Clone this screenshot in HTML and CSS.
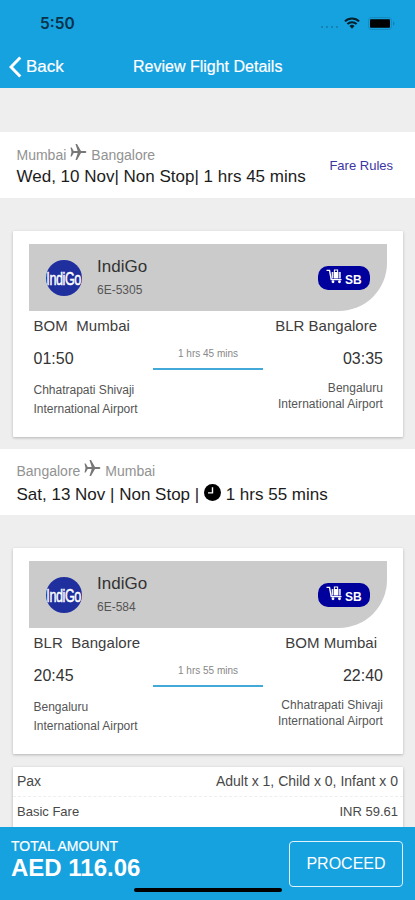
FILE: index.html
```html
<!DOCTYPE html>
<html lang="en">
<head>
<meta charset="utf-8">
<title>Review Flight Details</title>
<link rel="stylesheet" href="styles.css">
</head>
<body>
<svg class="defs" aria-hidden="true">
  <symbol id="plane" viewBox="0 0 16 16">
    <path d="M0 3.600h1.200L3.200 7h4L5 0h1.500l4 7H14c2.600 0 2.600 2 0 2h-3.500l-4 7H5l2.200-7h-4l-2 3.400H0L1 8z"/>
  </symbol>
  <symbol id="trolley" viewBox="0 0 18 16">
    <path d="M.5 1.500h3.200l1.800 9.800h11" fill="none" stroke="#fff" stroke-width="1.500"/>
    <path d="M6 3.200h1.300v7H6zM8 3.200h5.200v7H8zM14 3.200h1.600v7H14z" fill="#fff"/>
    <path d="M8.900 3.200V1h3.400v2.200" fill="none" stroke="#fff" stroke-width="1.100"/>
    <circle cx="7.400" cy="13.600" r="1.500" fill="#fff"/>
    <circle cx="14.300" cy="13.600" r="1.500" fill="#fff"/>
  </symbol>
</svg>
<div class="screen">
  <header class="top">
    <div class="status">
      <span class="clock">5:50</span>
      <span class="signal"><i></i><i></i><i></i><i></i></span>
      <svg class="wifi" viewBox="0 0 16 12"><path d="M.9 4.400a10.200 10.200 0 0 1 14.200 0M3.400 7a6.600 6.600 0 0 1 9.200 0" fill="none" stroke="#06202c" stroke-width="2"/><path d="M5.500 9a3.700 3.700 0 0 1 5 0L8 11.800z" fill="#06202c"/></svg>
      <svg class="battery" viewBox="0 0 27 13"><rect x=".5" y=".5" width="23" height="12" rx="3" fill="none" stroke="#168bc0"/><rect x="2" y="2.300" width="20" height="8.400" rx="1" fill="#000"/><path d="M25 4.300c2 .7 2 3.700 0 4.400z" fill="#1581b1"/></svg>
    </div>
    <div class="nav">
      <svg class="chevron" viewBox="0 0 13 22"><path d="M11.300 1.500 2 11l9.300 9.500" fill="none" stroke="#fff" stroke-width="3"/></svg>
      <span class="back">Back</span>
      <span class="title">Review Flight Details</span>
    </div>
  </header>

  <main class="content">
    <section class="leg">
      <div>
        <div class="route"><span>Mumbai</span><svg class="plane"><use href="#plane"/></svg><span>Bangalore</span></div>
        <div class="when">Wed, 10 Nov| Non Stop| 1 hrs 45 mins</div>
      </div>
      <a class="rules">Fare Rules</a>
    </section>

    <article class="card">
      <div class="airline">
        <div class="logo"><span>IndiGo</span></div>
        <div class="flight"><div class="name">IndiGo</div><div class="number">6E-5305</div></div>
        <div class="badge"><svg class="trolley"><use href="#trolley"/></svg><b>SB</b></div>
      </div>
      <div class="trip">
        <div class="from">
          <div class="city">BOM&nbsp; Mumbai</div>
          <div class="time">01:50</div>
          <div class="airport">Chhatrapati Shivaji<br>International Airport</div>
        </div>
        <div class="duration">1 hrs 45 mins</div>
        <div class="to">
          <div class="city">BLR Bangalore</div>
          <div class="time">03:35</div>
          <div class="airport">Bengaluru<br>International Airport</div>
        </div>
      </div>
    </article>

    <section class="leg return">
      <div>
        <div class="route"><span>Bangalore</span><svg class="plane"><use href="#plane"/></svg><span>Mumbai</span></div>
        <div class="when">Sat, 13 Nov | Non Stop | <svg class="dial" viewBox="0 0 16 16"><circle cx="8" cy="8" r="8"/><path d="M8 3v5.300H3.800" fill="none" stroke="#fff" stroke-width="1.300"/></svg> 1 hrs 55 mins</div>
      </div>
    </section>

    <article class="card">
      <div class="airline">
        <div class="logo"><span>IndiGo</span></div>
        <div class="flight"><div class="name">IndiGo</div><div class="number">6E-584</div></div>
        <div class="badge"><svg class="trolley"><use href="#trolley"/></svg><b>SB</b></div>
      </div>
      <div class="trip">
        <div class="from">
          <div class="city">BLR&nbsp; Bangalore</div>
          <div class="time">20:45</div>
          <div class="airport">Bengaluru<br>International Airport</div>
        </div>
        <div class="duration">1 hrs 55 mins</div>
        <div class="to">
          <div class="city">BOM Mumbai</div>
          <div class="time">22:40</div>
          <div class="airport">Chhatrapati Shivaji<br>International Airport</div>
        </div>
      </div>
    </article>

    <section class="fare">
      <div class="row pax"><span>Pax</span><span>Adult x 1, Child x 0, Infant x 0</span></div>
      <div class="row"><span>Basic Fare</span><span>INR 59.61</span></div>
    </section>
  </main>

  <footer class="total">
    <div>
      <div class="label">TOTAL AMOUNT</div>
      <div class="amount">AED 116.06</div>
    </div>
    <button class="proceed">PROCEED</button>
    <div class="home"></div>
  </footer>
</div>
</body>
</html>
```
FILE: styles.css
```css
* { box-sizing: border-box; }

body {
  margin: 0;
  font-family: "Liberation Sans", Arial, sans-serif;
  color: #333;
  background: #eee;
}

.defs { display: none; }

.screen {
  width: 415px;
  height: 900px;
  display: flex;
  flex-direction: column;
  overflow: hidden;
}

.top {
  flex: none;
  height: 88px;
  background: #16a1df;
}

.status {
  height: 45px;
  padding: 1px 20px 0 40px;
  display: flex;
  align-items: center;
}

.clock {
  margin: 1px auto 0 0;
  font: 600 15.500px/20px Inter, sans-serif;
  color: #07324a;
}

.signal {
  display: flex;
  gap: 3px;
  margin: 8px 6px 0 0;
}

.signal i {
  width: 2px;
  height: 2px;
  border-radius: 1px;
  background: #167aa5;
}

.wifi { width: 16px; height: 12px; margin-right: 8px; }
.battery { width: 27px; height: 13px; }

.nav {
  height: 43px;
  padding-left: 9px;
  display: flex;
  align-items: center;
  color: #fff;
  -webkit-text-stroke: 0.2px #fff;
}

.chevron { width: 13px; height: 22px; }
.back { width: 107px; margin-left: 4px; font-size: 17px; line-height: 20px; }
.title { font-size: 16px; line-height: 20px; }

.content {
  flex: 1;
  min-height: 0;
  padding-top: 44px;
  overflow: hidden;
}

.leg {
  height: 66px;
  padding: 13px 22px 0 16px;
  display: flex;
  justify-content: space-between;
  background: #fff;
}

.route {
  height: 20px;
  margin-bottom: 1px;
  padding-left: 0.500px;
  display: flex;
  align-items: center;
  gap: 4px;
  font-size: 14px;
  line-height: 20px;
  color: #929292;
}

.plane {
  width: 17px;
  height: 16px;
  margin-bottom: 7px;
  fill: #777;
}

.when {
  padding-left: 0.500px;
  font-size: 17px;
  line-height: 22px;
  color: #1c1c1c;
  white-space: nowrap;
}

.rules {
  margin-top: 11px;
  font-size: 13px;
  line-height: 20px;
  color: #3b35a5;
}

.card {
  height: 206px;
  margin: 33px 12px 0 13px;
  padding: 13px 16px;
  background: #fff;
  border-radius: 1px;
  box-shadow: 0 1px 3px rgba(0, 0, 0, 0.24);
}

.airline {
  height: 67px;
  padding: 0 17px;
  display: flex;
  align-items: center;
  background: #cbcbcb;
  border-bottom-right-radius: 48px;
}

.logo {
  width: 36px;
  height: 36px;
  display: flex;
  align-items: center;
  justify-content: center;
  overflow: hidden;
  border-radius: 50%;
  background: #1f2f9e;
}

.logo span {
  font-size: 15px;
  line-height: 18px;
  color: #fff;
  -webkit-text-stroke: 0.4px #fff;
  letter-spacing: -0.500px;
  transform: translateY(1px) scale(0.840, 1.250);
}

.flight { margin: 1px auto 0 15px; }
.name { font-size: 17px; line-height: 20px; margin-bottom: 3px; color: #333; }
.number { font-size: 12px; line-height: 20px; color: #555; }

.badge {
  width: 52px;
  height: 24px;
  padding-left: 8px;
  display: flex;
  border-radius: 10px;
  background: #00009c;
  color: #fff;
}

.trolley { width: 17px; height: 15px; margin-top: 3px; }
.badge b { margin: 7px 0 0 2px; font-size: 12px; line-height: 14px; }

.trip {
  padding: 5px 4px 0;
  display: grid;
  grid-template-columns: 120px 110px 120px;
}

.from { padding-left: 0.500px; }
.city { font-size: 15px; line-height: 20px; color: #3d3d3d; white-space: nowrap; }
.from .city { letter-spacing: 0.050px; }
.time { margin-top: 13px; font-size: 16px; line-height: 20px; color: #333; }
.airport { margin-top: 12px; font-size: 12px; line-height: 19px; color: #555; white-space: nowrap; }

.to { text-align: right; }
.to .city { margin-right: 6px; }
.to .airport { margin-top: 11px; line-height: 16px; letter-spacing: 0.050px; }

.duration {
  height: 24px;
  margin-top: 30px;
  border-bottom: 2px solid #42a9d8;
  font-size: 10px;
  line-height: 15px;
  text-align: center;
  color: #888;
}

.return {
  margin-top: 12px;
  padding-top: 12px;
}

.return .route { margin-bottom: 3px; }
.dial { width: 17px; height: 17px; vertical-align: -1px; }

.fare {
  height: 100px;
  margin: 13px 12px 0 13px;
  background: #fff;
  box-shadow: 0 1px 3px rgba(0, 0, 0, 0.24);
}

.row {
  height: 30px;
  padding: 0 5px 0 4px;
  display: flex;
  justify-content: space-between;
  font-size: 13px;
  line-height: 29px;
  color: #484848;
}

.pax { font-size: 14px; border-bottom: 1px dashed #eee; }

.total {
  position: relative;
  flex: none;
  height: 73px;
  padding: 11px 12px 0 11px;
  display: flex;
  justify-content: space-between;
  background: #16a1df;
  color: #fff;
}

.label { font-size: 14px; line-height: 16px; -webkit-text-stroke: 0.2px #fff; }
.amount { font-size: 24px; font-weight: 700; line-height: 28px; }

.proceed {
  width: 114px;
  height: 46px;
  margin-top: 3px;
  padding: 0;
  border: 1.500px solid #e0f4fd;
  border-radius: 4px;
  background: none;
  color: #fff;
  font: 16px/20px "Liberation Sans", Arial, sans-serif;
}

.home {
  position: absolute;
  left: 134px;
  bottom: 8px;
  width: 148px;
  height: 4px;
  border-radius: 2px;
  background: #000;
}
```
